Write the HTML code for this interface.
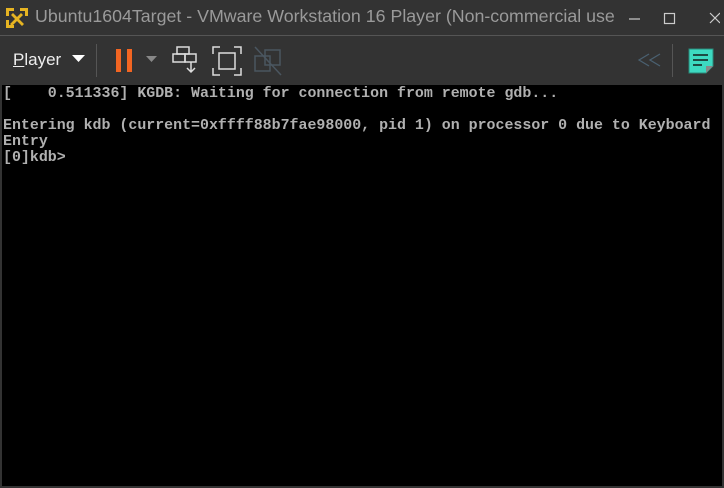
<!DOCTYPE html>
<html><head><style>
body{margin:0;width:724px;height:488px;background:#333;overflow:hidden;position:relative;font-family:"Liberation Sans",sans-serif}
.title{position:absolute;left:0;top:0;width:724px;height:35px;background:#333}
.title .t{position:absolute;left:35px;top:6px;font-size:17.8px;color:#9a9a9a;white-space:nowrap}
.sep{position:absolute;left:0;top:35px;width:724px;height:1px;background:#555}
.tb{position:absolute;left:0;top:36px;width:724px;height:48px;background:#333}
.con{position:absolute;left:2px;top:85px;width:720px;height:401px;background:#000}
pre{margin:0;position:absolute;left:1px;top:1px;font-family:"Liberation Mono",monospace;font-weight:bold;font-size:14.93px;line-height:16px;color:#b0b0b0}
</style></head><body>
<div class="title">
<svg style="position:absolute;left:5px;top:7px" width="24" height="22" viewBox="0 0 24 22"><g fill="#e6b422"><path d="M1 1h8v3H4v5H1z"/><path d="M23 1h-8v3h5v5h3z"/><path d="M1 21h8v-3H4v-5H1z"/><path d="M8 6l4 4 4-4 2 2-4 4 5 5-2 2-5-5-5 5-2-2 5-5-4-4z"/></g></svg>
<div class="t">Ubuntu1604Target - VMware Workstation 16 Player (Non-commercial use</div>
<svg style="position:absolute;left:620px;top:10px" width="100" height="18"><g stroke="#ccc" stroke-width="1.2" fill="none"><path d="M9 9h11"/><rect x="44.5" y="3.5" width="10" height="10"/><path d="M90 3l10 10M100 3l-10 10"/></g></svg>
</div>
<div class="sep"></div>
<div class="tb">
<div style="position:absolute;left:13px;top:14px;font-size:17px;color:#eee"><u>P</u>layer</div>
<svg style="position:absolute;left:72px;top:19px" width="14" height="8"><path d="M0 0h13L6.5 7z" fill="#fff"/></svg>
<div style="position:absolute;left:96px;top:8px;width:1px;height:33px;background:#555"></div>
<div style="position:absolute;left:116px;top:13px;width:5px;height:23px;background:#f26522"></div>
<div style="position:absolute;left:127px;top:13px;width:5px;height:23px;background:#f26522"></div>
<svg style="position:absolute;left:146px;top:20px" width="12" height="7"><path d="M0 0h11L5.5 6z" fill="#888"/></svg>
<svg style="position:absolute;left:172px;top:10px" width="28" height="30" viewBox="0 0 28 30" fill="none" stroke="#ddd" stroke-width="1.5"><rect x="5" y="1" width="12" height="7"/><rect x="1" y="8" width="12" height="8"/><rect x="13" y="8" width="11" height="8"/><path d="M19 16v9M15 22l4 4 4-4"/></svg>
<svg style="position:absolute;left:212px;top:10px" width="30" height="30" fill="none" stroke="#ddd" stroke-width="1.5"><path d="M1 8V1h7M22 1h7v7M29 22v7h-7M8 29H1v-7"/><rect x="7" y="7" width="16" height="16"/></svg>
<svg style="position:absolute;left:254px;top:10px" width="28" height="30" fill="none" stroke="#4a5660" stroke-width="1.5"><rect x="1" y="10" width="15" height="15"/><rect x="11" y="4" width="15" height="15"/><path d="M1 1l26 28"/></svg>
<svg style="position:absolute;left:638px;top:17px" width="24" height="14" fill="none" stroke="#4a6070" stroke-width="1.3"><path d="M11 1L1 7l10 6M22 1L12 7l10 6"/></svg>
<div style="position:absolute;left:672px;top:8px;width:1px;height:33px;background:#555"></div>
<svg style="position:absolute;left:688px;top:12px" width="26" height="26"><path d="M1 1h24v17l-7 7H1z" fill="#3dd9c1" stroke="#2a8a7a"/><path d="M5 7h15M5 12h15M5 17h9" stroke="#1d4a44" stroke-width="2"/><path d="M18 25v-7h7" fill="#888"/></svg>
</div>
<div class="con"><pre>[    0.511336] KGDB: Waiting for connection from remote gdb...

Entering kdb (current=0xffff88b7fae98000, pid 1) on processor 0 due to Keyboard
Entry
[0]kdb&gt;</pre></div>
</body></html>
